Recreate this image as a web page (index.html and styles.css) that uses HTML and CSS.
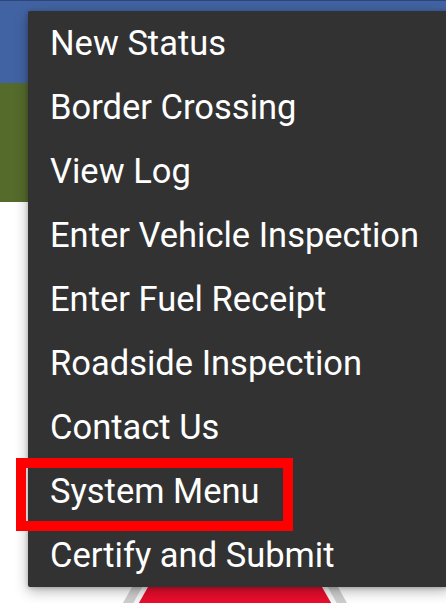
FILE: index.html
```html
<!DOCTYPE html>
<html lang="en">
<head>
  <meta charset="UTF-8">
  <meta name="viewport" content="width=device-width, initial-scale=1.0">
  <title>Menu</title>
  <link rel="stylesheet" href="styles.css">
</head>
<body>

  <div class="app">
    <div class="top-bar"></div>
    <div class="sub-bar"></div>
    <div class="content">
      <svg class="stop-sign" width="300" height="120" viewBox="0 0 300 120">
        <polygon points="51,20 249,20 300,110 0,110" fill="#cfcfcf"/>
        <polygon points="59,24 241,24 295,120 5,120" fill="#f7f7f7"/>
        <polygon points="63,27 237,27 290,120 10,120" fill="#ea0d2d"/>
      </svg>
    </div>
  </div>

  <!-- overflow menu -->
  <ul class="popup-menu">
    <li class="menu-item">New Status</li>
    <li class="menu-item">Border Crossing</li>
    <li class="menu-item">View Log</li>
    <li class="menu-item">Enter Vehicle Inspection</li>
    <li class="menu-item">Enter Fuel Receipt</li>
    <li class="menu-item">Roadside Inspection</li>
    <li class="menu-item">Contact Us</li>
    <li class="menu-item marked">System Menu<span class="mark-box"></span></li>
    <li class="menu-item">Certify and Submit</li>
  </ul>

</body>
</html>
```

FILE: styles.css
```css
html, body {
  margin: 0;
  padding: 0;
}
body {
  width: 446px;
  height: 603px;
  overflow: hidden;
  position: relative;
  background-color: #ffffff;
  font-family: Roboto, 'Noto Sans', sans-serif;
}
.app {
  display: flex;
  flex-direction: column;
  height: 100%;
  overflow: hidden;
}
.top-bar {
  flex-shrink: 0;
  height: 82px;
  background-color: #4263a3;
  border-top: 1px solid #2b4677;
}
.sub-bar {
  flex-shrink: 0;
  height: 119px;
  background-color: #556b2c;
}
.content {
  flex: 1;
  min-height: 0;
  overflow: hidden;
  padding-top: 358px;
  padding-left: 85px;
}
.stop-sign {
  display: block;
}
/* 메뉴는 화면 위에 떠 있음 */
.popup-menu {
  position: absolute;
  top: 11px;
  left: 28px;
  right: -4px;
  margin: 0;
  padding: 0;
  list-style: none;
  background-color: #323232;
  border-radius: 2px;
  box-shadow: 0 4px 14px rgba(0, 0, 0, 0.3), 0 1px 4px rgba(0, 0, 0, 0.2);
}
.menu-item {
  position: relative;
  height: 64px;
  line-height: 64px;
  padding-left: 22px;
  color: #ffffff;
  font-size: 34.5px;
  white-space: nowrap;
}
.mark-box {
  position: absolute;
  left: -12px;
  top: -1px;
  width: 257px;
  height: 53px;
  border: 10px solid #ff0000;
}
```
